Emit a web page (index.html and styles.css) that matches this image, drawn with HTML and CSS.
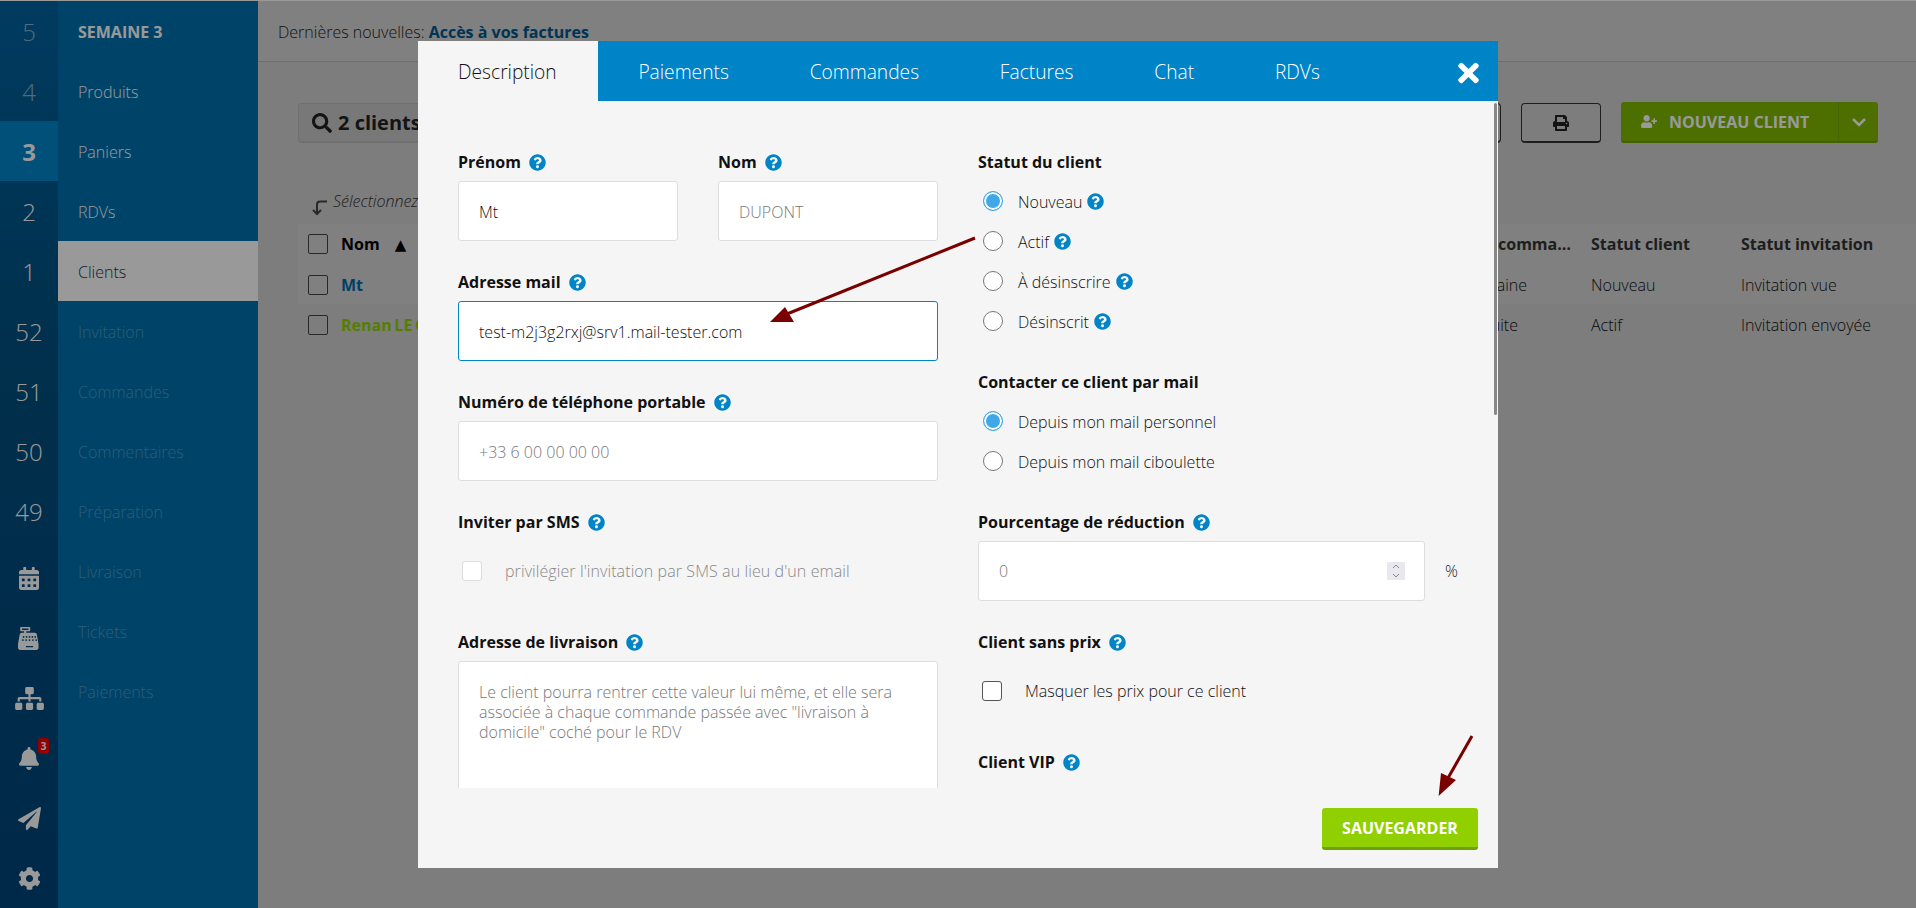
FILE: index.html
```html
<!DOCTYPE html>
<html lang="fr">
<head>
<meta charset="utf-8">
<title>Clients</title>
<link rel="stylesheet" href="styles.css">
</head>
<body>
<svg class="defs" width="0" height="0" aria-hidden="true">
  <symbol id="i-help" viewBox="0 0 512 512"><path d="M504 256c0 136.997-111.043 248-248 248S8 392.997 8 256C8 119.083 119.043 8 256 8s248 111.083 248 248zM262.655 90c-54.497 0-89.255 22.957-116.549 63.758-3.536 5.286-2.353 12.415 2.715 16.258l34.699 26.31c5.205 3.947 12.621 3.008 16.665-2.122 17.864-22.658 30.113-35.797 57.303-35.797 20.429 0 45.698 13.148 45.698 32.958 0 14.976-12.363 22.667-32.534 33.976C247.128 238.528 216 254.941 216 296v4c0 6.627 5.373 12 12 12h56c6.627 0 12-5.373 12-12v-1.333c0-28.462 83.186-29.647 83.186-106.667 0-58.002-60.165-102-116.531-102zM256 338c-25.365 0-46 20.635-46 46 0 25.364 20.635 46 46 46s46-20.636 46-46c0-25.365-20.635-46-46-46z"/></symbol>
  <symbol id="i-search" viewBox="0 0 512 512"><path d="M505 442.7L405.3 343c-4.5-4.5-10.6-7-17-7H372c27.6-35.3 44-79.7 44-128C416 93.1 322.9 0 208 0S0 93.1 0 208s93.1 208 208 208c48.3 0 92.7-16.4 128-44v16.3c0 6.4 2.5 12.5 7 17l99.7 99.7c9.4 9.4 24.6 9.4 33.9 0l28.3-28.3c9.4-9.4 9.4-24.6.1-34zM208 336c-70.7 0-128-57.2-128-128 0-70.7 57.2-128 128-128 70.7 0 128 57.2 128 128 0 70.7-57.2 128-128 128z"/></symbol>
</svg>

<div class="app">
  <aside class="rail">
    <div class="rail-row rail-dim">5</div>
    <div class="rail-row rail-dim">4</div>
    <div class="rail-row rail-active">3</div>
    <div class="rail-row">2</div>
    <div class="rail-row">1</div>
    <div class="rail-row">52</div>
    <div class="rail-row">51</div>
    <div class="rail-row">50</div>
    <div class="rail-row">49</div>
    <div class="rail-row rail-icon">
      <svg class="ic-cal" viewBox="0 0 448 512"><path d="M0 464c0 26.5 21.5 48 48 48h352c26.5 0 48-21.5 48-48V192H0v272zm320-196c0-6.6 5.4-12 12-12h40c6.6 0 12 5.4 12 12v40c0 6.6-5.4 12-12 12h-40c-6.6 0-12-5.4-12-12v-40zm0 128c0-6.6 5.4-12 12-12h40c6.6 0 12 5.4 12 12v40c0 6.6-5.4 12-12 12h-40c-6.6 0-12-5.4-12-12v-40zM192 268c0-6.6 5.4-12 12-12h40c6.6 0 12 5.4 12 12v40c0 6.6-5.4 12-12 12h-40c-6.6 0-12-5.4-12-12v-40zm0 128c0-6.6 5.4-12 12-12h40c6.6 0 12 5.4 12 12v40c0 6.6-5.4 12-12 12h-40c-6.6 0-12-5.4-12-12v-40zM64 268c0-6.6 5.4-12 12-12h40c6.6 0 12 5.4 12 12v40c0 6.6-5.4 12-12 12H76c-6.6 0-12-5.4-12-12v-40zm0 128c0-6.6 5.4-12 12-12h40c6.6 0 12 5.4 12 12v40c0 6.6-5.4 12-12 12H76c-6.6 0-12-5.4-12-12v-40zM400 64h-48V16c0-8.8-7.2-16-16-16h-32c-8.8 0-16 7.2-16 16v48H160V16c0-8.8-7.2-16-16-16h-32c-8.8 0-16 7.2-16 16v48H48C21.5 64 0 85.5 0 112v48h448v-48c0-26.5-21.5-48-48-48z"/></svg>
    </div>
    <div class="rail-row rail-icon">
      <svg class="ic-cash" viewBox="0 0 512 512"><path fill-rule="evenodd" d="M64 0h192c9 0 16 7 16 16v64c0 9-7 16-16 16h-72v32h188c24 0 44 17 48 40l36 208c1 4 1 8 1 12v76c0 27-21 48-48 48H48c-27 0-48-21-48-48v-76c0-4 0-8 1-12l36-208c4-23 24-40 48-40h51V96H64c-9 0-16-7-16-16V16C48 7 55 0 64 0zm24 32v32h144V32H88zM124 200a20 20 0 1 0 0 40 20 20 0 1 0 0-40zm68 0a20 20 0 1 0 0 40 20 20 0 1 0 0-40zm64 0a20 20 0 1 0 0 40 20 20 0 1 0 0-40zm64 0a20 20 0 1 0 0 40 20 20 0 1 0 0-40zm64 0a20 20 0 1 0 0 40 20 20 0 1 0 0-40zM108 272a20 20 0 1 0 0 40 20 20 0 1 0 0-40zm72 0a20 20 0 1 0 0 40 20 20 0 1 0 0-40zm76 0a20 20 0 1 0 0 40 20 20 0 1 0 0-40zm76 0a20 20 0 1 0 0 40 20 20 0 1 0 0-40zm72 0a20 20 0 1 0 0 40 20 20 0 1 0 0-40zM176 424v24h160v-24H176z"/></svg>
    </div>
    <div class="rail-row rail-icon">
      <svg class="ic-site" viewBox="0 0 640 512"><path d="M128 352H32c-17.67 0-32 14.33-32 32v96c0 17.67 14.33 32 32 32h96c17.67 0 32-14.33 32-32v-96c0-17.67-14.33-32-32-32zm-24-80h192v48h48v-48h192v48h48v-57.59c0-21.17-17.23-38.41-38.41-38.41H344v-64h40c17.67 0 32-14.33 32-32V32c0-17.67-14.33-32-32-32H256c-17.67 0-32 14.33-32 32v96c0 17.67 14.33 32 32 32h40v64H94.41C73.23 224 56 241.23 56 262.41V320h48v-48zm264 80h-96c-17.67 0-32 14.33-32 32v96c0 17.67 14.33 32 32 32h96c17.67 0 32-14.33 32-32v-96c0-17.67-14.33-32-32-32zm240 0h-96c-17.67 0-32 14.33-32 32v96c0 17.67 14.33 32 32 32h96c17.67 0 32-14.33 32-32v-96c0-17.67-14.33-32-32-32z"/></svg>
    </div>
    <div class="rail-row rail-icon">
      <span class="bell">
        <svg class="ic-cal" viewBox="0 0 448 512"><path d="M224 512c35.32 0 63.97-28.65 63.97-64H160.03c0 35.35 28.65 64 63.97 64zm215.39-149.71c-19.32-20.76-55.47-51.99-55.47-154.29 0-77.7-54.48-139.9-127.94-155.16V32c0-17.67-14.32-32-31.98-32s-31.98 14.33-31.98 32v20.84C118.56 68.1 64.08 130.3 64.08 208c0 102.3-36.15 133.53-55.47 154.29-6 6.45-8.66 14.16-8.61 21.71.11 16.4 12.98 32 32.1 32h383.8c19.12 0 32-15.6 32.1-32 .05-7.55-2.61-15.27-8.61-21.71z"/></svg>
        <span class="badge">3</span>
      </span>
    </div>
    <div class="rail-row rail-icon">
      <svg class="ic-cash" viewBox="0 0 512 512"><path d="M476 3.2L12.5 270.6c-18.1 10.4-15.8 35.6 2.2 43.2L121 358.4l287.3-253.2c5.5-4.9 13.3 2.6 8.6 8.3L176 407v80.5c0 23.6 28.5 32.9 42.5 15.8L282 426l124.6 52.2c14.2 6 30.4-2.9 33-18.2l72-432C515 7.8 493.3-6.8 476 3.2z"/></svg>
    </div>
    <div class="rail-row rail-icon">
      <svg class="ic-cash" viewBox="0 0 512 512"><path d="M487.4 315.7l-42.6-24.6c4.3-23.2 4.3-47 0-70.2l42.6-24.6c4.9-2.8 7.1-8.6 5.5-14-11.1-35.6-30-67.8-54.7-94.6-3.8-4.1-10-5.1-14.8-2.3L380.8 110c-17.9-15.4-38.5-27.3-60.8-35.1V25.8c0-5.6-3.9-10.5-9.4-11.7-36.7-8.2-74.3-7.8-109.2 0-5.5 1.2-9.4 6.1-9.4 11.7V75c-22.2 7.9-42.8 19.8-60.8 35.1L88.7 85.5c-4.9-2.8-11-1.9-14.8 2.3-24.7 26.7-43.6 58.9-54.7 94.6-1.7 5.4.6 11.2 5.5 14L67.3 221c-4.3 23.2-4.3 47 0 70.2l-42.6 24.6c-4.9 2.8-7.1 8.6-5.5 14 11.1 35.6 30 67.8 54.7 94.6 3.8 4.1 10 5.1 14.8 2.3l42.6-24.6c17.9 15.4 38.5 27.3 60.8 35.1v49.2c0 5.6 3.9 10.5 9.4 11.7 36.7 8.2 74.3 7.8 109.2 0 5.5-1.2 9.4-6.1 9.4-11.7v-49.2c22.2-7.9 42.8-19.8 60.8-35.1l42.6 24.6c4.9 2.8 11 1.9 14.8-2.3 24.7-26.7 43.6-58.9 54.7-94.6 1.5-5.5-.7-11.3-5.6-14.1zM256 336c-44.1 0-80-35.9-80-80s35.9-80 80-80 80 35.9 80 80-35.9 80-80 80z"/></svg>
    </div>
  </aside>

  <nav class="nav">
    <div class="nav-row nav-title">SEMAINE 3</div>
    <div class="nav-row">Produits</div>
    <div class="nav-row">Paniers</div>
    <div class="nav-row">RDVs</div>
    <div class="nav-row nav-current">Clients</div>
    <div class="nav-row nav-off">Invitation</div>
    <div class="nav-row nav-off">Commandes</div>
    <div class="nav-row nav-off">Commentaires</div>
    <div class="nav-row nav-off">Préparation</div>
    <div class="nav-row nav-off">Livraison</div>
    <div class="nav-row nav-off">Tickets</div>
    <div class="nav-row nav-off">Paiements</div>
  </nav>

  <main class="main">
    <header class="news">Dernières nouvelles: <a class="news-link">Accès à vos factures</a></header>
    <section class="content">
      <div class="toolbar">
        <div class="search">
          <svg class="search-ic"><use href="#i-search"/></svg>
          <span>2 clients</span>
        </div>
        <div class="tool-btn tool-hidden"></div>
        <div class="tool-btn">
          <svg class="print-ic" viewBox="0 0 512 512"><path d="M448 192V77.25c0-8.49-3.37-16.62-9.37-22.63L393.37 9.37c-6-6-14.14-9.37-22.63-9.37H96C78.33 0 64 14.33 64 32v160c-35.35 0-64 28.65-64 64v112c0 8.84 7.16 16 16 16h48v96c0 17.67 14.33 32 32 32h320c17.67 0 32-14.33 32-32v-96h48c8.84 0 16-7.16 16-16V256c0-35.35-28.65-64-64-64zm-64 256H128v-96h256v96zm0-224H128V64h192v48c0 8.84 7.16 16 16 16h48v96zm48 72c-13.25 0-24-10.75-24-24 0-13.26 10.75-24 24-24s24 10.74 24 24c0 13.25-10.75 24-24 24z"/></svg>
        </div>
        <div class="new-client">
          <div class="new-main">
            <svg class="plus-ic" viewBox="0 0 640 512"><path d="M624 208h-64v-64c0-8.8-7.2-16-16-16h-32c-8.8 0-16 7.2-16 16v64h-64c-8.8 0-16 7.2-16 16v32c0 8.8 7.2 16 16 16h64v64c0 8.8 7.2 16 16 16h32c8.8 0 16-7.2 16-16v-64h64c8.8 0 16-7.2 16-16v-32c0-8.8-7.2-16-16-16zm-400 48c70.7 0 128-57.3 128-128S294.7 0 224 0 96 57.3 96 128s57.3 128 128 128zm89.6 32h-16.7c-22.2 10.2-46.9 16-72.9 16s-50.6-5.8-72.9-16h-16.7C60.2 288 0 348.2 0 422.4V464c0 26.5 21.5 48 48 48h352c26.5 0 48-21.5 48-48v-41.6c0-74.2-60.2-134.4-134.4-134.4z"/></svg>
            <span>NOUVEAU CLIENT</span>
          </div>
          <div class="new-drop">
            <svg class="chev" viewBox="0 0 16 10"><polyline points="2,2 8,8 14,2"/></svg>
          </div>
        </div>
      </div>

      <div class="hint">
        <svg class="hint-ic" viewBox="0 0 18 18"><path d="M17 3.5H10C8 3.5 7 4.5 7 6.5v9M3 12l4 4 4-4"/></svg>
        <span>Sélectionnez des clients</span>
      </div>

      <div class="table">
        <div class="tr th band">
          <span class="cb"></span>
          <span class="c-name">Nom <span class="sort">▲</span></span>
          <span class="c-cmd">De. commande</span>
          <span class="c-status">Statut client</span>
          <span class="c-inv">Statut invitation</span>
        </div>
        <div class="tr band">
          <span class="cb"></span>
          <span class="c-name name-blue">Mt</span>
          <span class="c-cmd">Semaine</span>
          <span class="c-status">Nouveau</span>
          <span class="c-inv">Invitation vue</span>
        </div>
        <div class="tr">
          <span class="cb"></span>
          <span class="c-name name-green">Renan LE GALL</span>
          <span class="c-cmd">Ensuite</span>
          <span class="c-status">Actif</span>
          <span class="c-inv">Invitation envoyée</span>
        </div>
      </div>
    </section>
  </main>
</div>

<div class="backdrop"></div>

<div class="modal">
  <div class="tabs">
    <div class="tab tab-on">Description</div>
    <div class="tab">Paiements</div>
    <div class="tab">Commandes</div>
    <div class="tab">Factures</div>
    <div class="tab">Chat</div>
    <div class="tab">RDVs</div>
    <svg class="close" viewBox="0 0 352 512"><path d="M242.72 256l100.07-100.07c12.28-12.28 12.28-32.19 0-44.48l-22.24-22.24c-12.28-12.28-32.19-12.28-44.48 0L176 189.28 75.93 89.21c-12.28-12.28-32.19-12.28-44.48 0L9.21 111.45c-12.28 12.28-12.28 32.19 0 44.48L109.28 256 9.21 356.07c-12.28 12.28-12.28 32.19 0 44.48l22.24 22.24c12.28 12.28 32.2 12.28 44.48 0L176 322.72l100.07 100.07c12.28 12.28 32.2 12.28 44.48 0l22.24-22.24c12.28-12.28 12.28-32.19 0-44.48L242.72 256z"/></svg>
  </div>

  <div class="form">
    <div class="col">
      <div class="pair">
        <div class="field">
          <label class="lbl">Prénom <svg class="help"><use href="#i-help"/></svg></label>
          <input class="inp" value="Mt">
        </div>
        <div class="field">
          <label class="lbl">Nom <svg class="help"><use href="#i-help"/></svg></label>
          <input class="inp" placeholder="DUPONT">
        </div>
      </div>
      <div class="field">
        <label class="lbl">Adresse mail <svg class="help"><use href="#i-help"/></svg></label>
        <input class="inp inp-focus" value="test-m2j3g2rxj@srv1.mail-tester.com">
      </div>
      <div class="field">
        <label class="lbl">Numéro de téléphone portable <svg class="help"><use href="#i-help"/></svg></label>
        <input class="inp" placeholder="+33 6 00 00 00 00">
      </div>
      <div class="field">
        <label class="lbl">Inviter par SMS <svg class="help"><use href="#i-help"/></svg></label>
        <div class="check-row check-off">
          <input class="check" type="checkbox" disabled>
          <span>privilégier l'invitation par SMS au lieu d'un email</span>
        </div>
      </div>
      <div class="field">
        <label class="lbl">Adresse de livraison <svg class="help"><use href="#i-help"/></svg></label>
        <textarea class="area" placeholder="Le client pourra rentrer cette valeur lui même, et elle sera associée à chaque commande passée avec &quot;livraison à domicile&quot; coché pour le RDV"></textarea>
      </div>
    </div>

    <div class="col">
      <div class="field">
        <label class="lbl">Statut du client</label>
        <div class="radio-row"><input class="radio" type="radio" name="st" checked><span>Nouveau</span><svg class="help help-near"><use href="#i-help"/></svg></div>
        <div class="radio-row"><input class="radio" type="radio" name="st"><span>Actif</span><svg class="help help-near"><use href="#i-help"/></svg></div>
        <div class="radio-row"><input class="radio" type="radio" name="st"><span>À désinscrire</span><svg class="help help-near"><use href="#i-help"/></svg></div>
        <div class="radio-row"><input class="radio" type="radio" name="st"><span>Désinscrit</span><svg class="help help-near"><use href="#i-help"/></svg></div>
      </div>
      <div class="field">
        <label class="lbl">Contacter ce client par mail</label>
        <div class="radio-row"><input class="radio" type="radio" name="ct" checked><span>Depuis mon mail personnel</span></div>
        <div class="radio-row"><input class="radio" type="radio" name="ct"><span>Depuis mon mail ciboulette</span></div>
      </div>
      <div class="field">
        <label class="lbl">Pourcentage de réduction <svg class="help"><use href="#i-help"/></svg></label>
        <div class="pct">
          <div class="pct-box">
            <span class="pct-val">0</span>
            <span class="spin"><svg viewBox="0 0 18 18"><polyline points="6,6 9,3 12,6"/><polyline points="6,12 9,15 12,12"/></svg></span>
          </div>
          <span class="pct-unit">%</span>
        </div>
      </div>
      <div class="field">
        <label class="lbl">Client sans prix <svg class="help"><use href="#i-help"/></svg></label>
        <div class="check-row">
          <input class="check" type="checkbox">
          <span>Masquer les prix pour ce client</span>
        </div>
      </div>
      <div class="field">
        <label class="lbl">Client VIP <svg class="help"><use href="#i-help"/></svg></label>
      </div>
    </div>
  </div>

  <div class="foot"><button class="save">SAUVEGARDER</button></div>
  <div class="thumb"></div>
</div>

<svg class="arrows" viewBox="0 0 1916 908" width="1916" height="908" aria-hidden="true">
  <line x1="975" y1="238" x2="782" y2="316" class="shaft"/>
  <polygon points="770,322 785,307 794,322" class="head"/>
  <line x1="1472" y1="736" x2="1448" y2="778" class="shaft"/>
  <polygon points="1438.6,796 1441,773 1456,780" class="head"/>
</svg>
</body>
</html>
```

FILE: styles.css
```css
* { box-sizing: border-box; }
html, body { margin: 0; height: 100%; overflow: hidden; }
body {
  width: 1916px;
  height: 908px;
  font-family: "Open Sans", "Noto Sans", sans-serif;
  font-size: 16px;
  color: #222;
  background: #d0d0d0;
  border-top: 1px solid #fff;
}
.defs { position: absolute; }

.app { display: flex; height: 907px; }

/* rail */
.rail {
  width: 58px;
  flex: none;
  background: linear-gradient(#0063a0 0, #00507f 40%, #00447a 100%);
  color: #fff;
  fill: #fff;
}
.rail-row {
  height: 60px;
  display: flex;
  align-items: center;
  justify-content: center;
  font-size: 24px;
  font-weight: 300;
}
.rail-dim { color: rgba(255,255,255,.55); }
.rail-active { background: #0085cc; font-weight: 700; font-size: 24px; }
.rail-icon { padding-top: 14px; }
.ic-cal { width: 20px; height: 23px; display: block; }
.ic-cash { width: 23px; height: 23px; display: block; }
.ic-site { width: 29px; height: 23px; display: block; }
.bell { position: relative; display: block; }
.badge {
  position: absolute;
  left: 19px;
  top: -9px;
  width: 11px;
  height: 16px;
  border-radius: 3px;
  background: #f00000;
  color: #fff;
  font-size: 10px;
  font-weight: 700;
  line-height: 16px;
  text-align: center;
}

/* nav */
.nav { width: 200px; flex: none; background: #0071ae; color: #fff; }
.nav-row {
  height: 60px;
  padding: 1px 0 0 20px;
  display: flex;
  align-items: center;
  font-size: 16px;
  font-weight: 300;
}
.nav-title { font-weight: 700; }
.nav-current { background: #fff; color: #0a3a5a; }
.nav-off { color: rgba(255,255,255,.3); }

/* main */
.main { flex: 1; min-width: 0; }
.news {
  height: 61px;
  padding: 21px 0 0 20px;
  font-size: 16px;
  line-height: 20px;
  font-weight: 300;
  border-bottom: 1px solid #b8b8b8;
  background: #d5d5d5;
}
.news-link { font-weight: 700; color: #00568c; }
.content { padding: 41px 0 0 40px; }

.toolbar { display: flex; gap: 20px; height: 40px; padding-right: 38px; }
.search {
  flex: 1;
  display: flex;
  align-items: center;
  gap: 6px;
  padding-left: 13px;
  font-size: 20px;
  font-weight: 700;
  color: #222;
  background: #c8c8c8;
  border: 1px solid #bbb;
  border-bottom-width: 2px;
  border-radius: 4px;
}
.search-ic { width: 20px; height: 20px; fill: #222; }
.tool-btn {
  width: 80px;
  display: flex;
  align-items: center;
  justify-content: center;
  border: 1px solid #333;
  border-bottom-width: 2px;
  border-radius: 4px;
}
.print-ic { width: 16px; height: 16px; fill: #222; }
.new-client {
  width: 257px;
  display: flex;
  margin-top: -1px;
  height: 41px;
  background: #80b900;
  border-bottom: 2px solid #6fa000;
  border-radius: 3px;
  color: #fff;
  font-size: 16px;
  font-weight: 700;
}
.new-main {
  width: 218px;
  display: flex;
  align-items: center;
  gap: 12px;
  padding-left: 20px;
  border-right: 1px solid #74a800;
}
.plus-ic { width: 16px; height: 13px; fill: #fff; }
.new-drop { flex: 1; display: flex; align-items: center; justify-content: center; }
.chev { width: 16px; height: 10px; fill: none; stroke: #fff; stroke-width: 2.5; }

.hint {
  display: flex;
  gap: 5px;
  height: 34px;
  margin-top: 47px;
  padding-left: 12px;
  font-size: 16px;
  font-style: italic;
  font-weight: 300;
  color: #333;
}
.hint-ic { width: 18px; height: 18px; margin-top: 8px; fill: none; stroke: #444; stroke-width: 2; }

.tr { display: flex; align-items: center; height: 40px; padding-top: 1px; font-size: 16px; font-weight: 300; color: #111; }
.th { padding-top: 0; }
.band { background: #d6d6d6; }
.th { font-weight: 700; color: #333; }
.cb {
  flex: none;
  width: 20px;
  height: 20px;
  margin: 0 13px 0 10px;
  border: 1px solid #444;
  border-radius: 2px;
}
.c-name { width: 1124px; flex: none; font-weight: 700; overflow: hidden; white-space: nowrap; }
.th .c-name { color: #000; }
.sort { margin-left: 11px; font-family: "DejaVu Sans", sans-serif; font-size: 15px; }
.name-blue { color: #0069aa; }
.name-green { color: #90d000; word-spacing: -1.5px; }
.c-cmd { width: 126px; flex: none; padding-right: 12px; overflow: hidden; white-space: nowrap; text-overflow: ellipsis; }
.th .c-cmd { padding-left: 3px; }
.c-status { width: 150px; flex: none; }
.c-inv { flex: 1; }

.backdrop { position: absolute; inset: 0; background: rgba(0,0,0,.4); }

/* modal */
.modal {
  position: absolute;
  left: 418px;
  top: 41px;
  width: 1080px;
  height: 827px;
  display: flex;
  flex-direction: column;
  background: #f5f5f5;
}
.tabs {
  position: relative;
  flex: none;
  display: flex;
  height: 60px;
  background: #0084c8;
  font-size: 19.2px;
  font-weight: 300;
  color: #fff;
}
.tab { padding: 0 40.4px; line-height: 61px; }
.tab-on { width: 180px; padding: 0 40px; background: #f5f5f5; color: #111; }
.close { position: absolute; right: 19px; top: 17px; width: 21px; height: 30px; fill: #fff; }

.form {
  flex: 1;
  min-height: 0;
  overflow: hidden;
  display: flex;
  gap: 40px;
  padding: 51px 0 0 40px;
}
.col { width: 480px; flex: none; }
.pair { display: flex; gap: 40px; }
.pair .field { width: 220px; }
.field { padding-bottom: 31px; }
.lbl {
  display: flex;
  align-items: center;
  gap: 8px;
  height: 20px;
  margin-bottom: 9px;
  font-size: 16px;
  font-weight: 700;
  color: #111;
}
.help { width: 17px; height: 17px; fill: #0084c8; flex: none; }
.help-near { margin-left: 5px; }
.inp {
  display: block;
  width: 100%;
  height: 60px;
  padding: 2px 20px 0;
  background: #fff;
  border: 1px solid #ddd;
  border-radius: 3px;
  font: 300 16px "Open Sans", "Noto Sans", sans-serif;
  color: #111;
  outline: none;
}
.inp::placeholder, .area::placeholder { color: #777; opacity: 1; }
.inp-focus { border-color: #0084c8; }
.area {
  display: block;
  width: 100%;
  height: 200px;
  padding: 20px;
  background: #fff;
  border: 1px solid #ddd;
  border-radius: 3px;
  font: 300 16px/20px "Open Sans", "Noto Sans", sans-serif;
  resize: none;
  outline: none;
}
.check-row {
  display: flex;
  align-items: center;
  height: 60px;
  font-weight: 300;
  color: #111;
}
.check-off { color: #888; letter-spacing: .09px; }
.check {
  appearance: none;
  flex: none;
  width: 20px;
  height: 20px;
  margin: 0 23px 0 4px;
  background: #fff;
  border: 1px solid #555;
  border-radius: 3px;
}
.check:disabled { border-color: #ddd; }
.radio-row {
  display: flex;
  align-items: center;
  height: 40px;
  font-weight: 300;
  color: #111;
}
.radio-row span { padding-top: 2px; }
.radio {
  appearance: none;
  flex: none;
  width: 20px;
  height: 20px;
  margin: 0 15px 0 5px;
  background: #fff;
  border: 1px solid #777;
  border-radius: 50%;
}
.radio:checked { background: #40a8e8; border-color: #40a8e8; box-shadow: inset 0 0 0 2px #fff; }
.pct { display: flex; align-items: center; }
.pct-box {
  width: 447px;
  height: 60px;
  display: flex;
  align-items: center;
  justify-content: space-between;
  padding: 0 19px 0 20px;
  background: #fff;
  border: 1px solid #ddd;
  border-radius: 3px;
  font-weight: 300;
  color: #777;
}
.spin { width: 18px; height: 18px; background: #e8e8ee; }
.spin svg { display: block; width: 18px; height: 18px; fill: none; stroke: #888; stroke-width: 1; }
.pct-unit { margin-left: 20px; font-weight: 300; }

.foot { flex: none; height: 80px; display: flex; justify-content: flex-end; padding: 20px 20px 0 0; }
.save {
  width: 156px;
  height: 42px;
  padding: 0;
  background: #90d000;
  border: 0;
  border-bottom: 3px solid #6fa000;
  border-radius: 3px;
  font: 700 16px "Open Sans", "Noto Sans", sans-serif;
  color: #fff;
}
.thumb { position: absolute; right: 1px; top: 62px; width: 3px; height: 312px; border-radius: 2px; background: #888; }

.arrows { position: absolute; left: 0; top: 0; pointer-events: none; }
.shaft { stroke: #7a0000; stroke-width: 3; }
.head { fill: #7a0000; }
```
